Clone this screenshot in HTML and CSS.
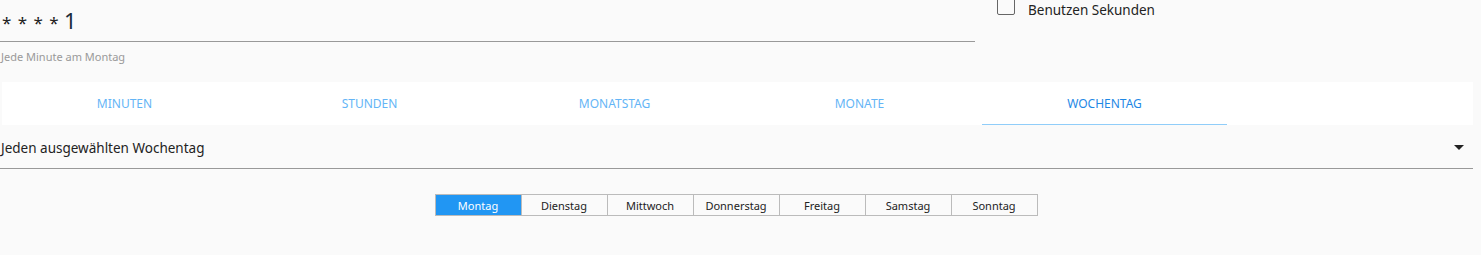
FILE: index.html
```html
<!DOCTYPE html>
<html lang="de">
<head>
  <meta charset="UTF-8">
  <title>Cron Ausdruck</title>
  <link rel="stylesheet" href="styles.css">
</head>
<body>
  <div class="page">
    <div class="top">
      <div class="expr">
        <div class="expr-field"><span class="stars">* * * *</span> <span class="val">1</span></div>
        <div class="expr-hint">Jede Minute am Montag</div>
      </div>
      <label class="seconds">
        <span class="box"></span>
        <span>Benutzen Sekunden</span>
      </label>
    </div>

    <div class="tabs">
      <div class="tab">MINUTEN</div>
      <div class="tab">STUNDEN</div>
      <div class="tab">MONATSTAG</div>
      <div class="tab">MONATE</div>
      <div class="tab active">WOCHENTAG</div>
    </div>

    <div class="select">
      <span>Jeden ausgewählten Wochentag</span>
      <svg class="caret" width="10" height="5" viewBox="0 0 10 5"><path d="M0 0h10L5 5z" fill="#222"/></svg>
    </div>

    <div class="days">
      <button class="day on">Montag</button>
      <button class="day">Dienstag</button>
      <button class="day">Mittwoch</button>
      <button class="day">Donnerstag</button>
      <button class="day">Freitag</button>
      <button class="day">Samstag</button>
      <button class="day">Sonntag</button>
    </div>
  </div>
</body>
</html>
```

FILE: styles.css
```css
body {
  margin: 0;
  background: #fafafa;
  font-family: 'Noto Sans', sans-serif;
  color: #222;
  overflow: hidden;
}
.page {
  width: 1473px;
}
.top {
  display: flex;
  height: 82px;
}
.expr {
  width: 975px;
}
.expr-field {
  height: 42px;
  box-sizing: border-box;
  border-bottom: 1px solid #999;
  padding: 5px 0 0 2px;
  line-height: 30px;
}
.stars {
  font-size: 17px;
  letter-spacing: 1px;
  color: #222;
}
.val {
  font-size: 22px;
  color: #1a2a3a;
}
.expr-hint {
  font-size: 11px;
  color: #999;
  margin-top: 7px;
  padding-left: 1px;
}
.seconds {
  display: flex;
  align-items: flex-start;
  margin-left: 22px;
  margin-top: -3px;
  font-size: 13.5px;
  color: #222;
}
.box {
  width: 16px;
  height: 16px;
  border: 1px solid #666;
  border-radius: 2px;
  margin-right: 13px;
}
.seconds span:last-child {
  line-height: 26px;
}
.tabs {
  display: flex;
  background: #fff;
  margin-left: 2px;
  height: 43px;
}
.tab {
  width: 245px;
  box-sizing: border-box;
  text-align: center;
  font-size: 12px;
  line-height: 43px;
  color: #64b5f6;
}
.tab.active {
  color: #1e88e5;
  border-bottom: 1px solid #90cdf9;
}
.select {
  display: flex;
  justify-content: space-between;
  align-items: center;
  height: 44px;
  box-sizing: border-box;
  border-bottom: 1px solid #999;
  padding: 2px 9px 0 1px;
  font-size: 13.5px;
}
.days {
  display: flex;
  justify-content: center;
  margin-top: 25px;
}
.day {
  width: 87px;
  height: 22px;
  margin-left: -1px;
  border: 1px solid #bbb;
  background: #fafafa;
  font-family: 'Noto Sans', sans-serif;
  font-size: 11px;
  color: #222;
  padding: 0;
}
.day.on {
  background: #2196f3;
  color: #fff;
}
```
